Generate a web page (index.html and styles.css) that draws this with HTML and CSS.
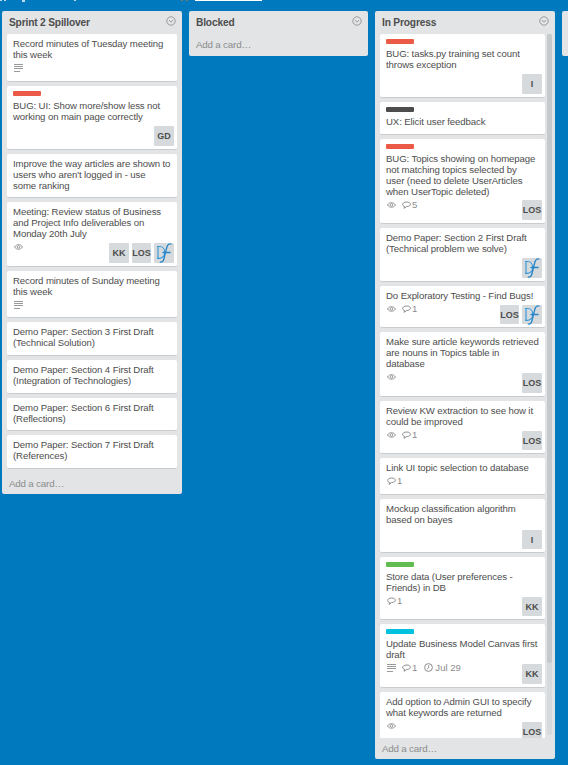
FILE: index.html
```html
<!DOCTYPE html>
<html lang="en">
<head>
<meta charset="utf-8">
<title>Board</title>
<link rel="stylesheet" href="styles.css">
</head>
<body>
<svg class="defs" width="0" height="0" aria-hidden="true">
  <symbol id="menu" viewBox="0 0 10 10"><circle cx="5" cy="5" r="4.2" fill="none" stroke="#929292" stroke-width=".9"/><path d="M2.9 4.200 5 6.100 7.100 4.200" fill="none" stroke="#929292" stroke-width=".9"/></symbol>
  <symbol id="lines" viewBox="0 0 9 8"><path d="M0 .5h9M0 2.500h9M0 4.500h9M0 7.500h6" fill="none" stroke="#999"/></symbol>
  <symbol id="eye" viewBox="0 0 9 8"><path d="M.5 4C2.500 .8 6.500 .8 8.500 4 6.500 7 2.500 7 .5 4Z" fill="none" stroke="#8c8c8c" stroke-width=".9"/><circle cx="4.500" cy="3.900" r="1.300" fill="none" stroke="#8c8c8c" stroke-width=".9"/></symbol>
  <symbol id="comment" viewBox="0 0 9 8"><path d="M2.600 5.500C-.6 4.500 .2 1 4.700 1 9.600 1 9.600 5.400 4.700 5.500L2 7.300Z" fill="none" stroke="#808080" stroke-width=".9"/></symbol>
  <symbol id="clock" viewBox="0 0 9 9"><circle cx="4.500" cy="4.500" r="3.900" fill="none" stroke="#8c8c8c"/><path d="M4.700 2v2.700L3 6" fill="none" stroke="#8c8c8c" stroke-width=".9"/></symbol>
  <symbol id="df" viewBox="0 0 20 20"><path d="M4 3.500V15.500M3 3.500H5.500C12.500 3.500 12.500 15.300 5.500 15.300H3" fill="none" stroke="#3c9ad8" stroke-width="1.200"/><path d="M17.500 1.300C15.500 .2 13.600 1.300 12.900 4L10 15.500C9.400 18.300 8 19.800 5.800 18.900M8.500 9.500H16.500" fill="none" stroke="#2585c8" stroke-width="1.300"/></symbol>
</svg>
<header class="topbar"><i class="bit a"></i><i class="bit b"></i><i class="bit c"></i><i class="bit d"></i><i class="mark"></i><i class="mark"></i><span class="field"></span></header>
<main class="board">
  <section class="list">
    <h2>Sprint 2 Spillover<svg><use href="#menu"/></svg></h2>
    <div class="cards">
      <article class="card h48"><div class="body"><p>Record minutes of Tuesday meeting<br>this week</p><div class="badges"><svg class="ln"><use href="#lines"/></svg></div></div></article>
      <article class="card h64"><div class="body"><i class="label red"></i><p>BUG: UI: Show more/show less not<br>working on main page correctly</p></div><div class="members"><b>GD</b></div></article>
      <article class="card h44"><div class="body"><p>Improve the way articles are shown to<br>users who aren't logged in - use<br>some ranking</p></div></article>
      <article class="card h65"><div class="body"><p>Meeting: Review status of Business<br>and Project Info deliverables on<br>Monday 20th July</p><div class="badges"><svg><use href="#eye"/></svg></div></div><div class="members"><b>KK</b><b class="narrow">LOS</b><b><svg><use href="#df"/></svg></b></div></article>
      <article class="card h47"><div class="body"><p>Record minutes of Sunday meeting<br>this week</p><div class="badges"><svg class="ln"><use href="#lines"/></svg></div></div></article>
      <article class="card h34"><div class="body"><p>Demo Paper: Section 3 First Draft<br>(Technical Solution)</p></div></article>
      <article class="card h34"><div class="body"><p>Demo Paper: Section 4 First Draft<br>(Integration of Technologies)</p></div></article>
      <article class="card h33"><div class="body"><p>Demo Paper: Section 6 First Draft<br>(Reflections)</p></div></article>
      <article class="card h34"><div class="body"><p>Demo Paper: Section 7 First Draft<br>(References)</p></div></article>
    </div>
    <footer class="tall">Add a card…</footer>
  </section>
  <section class="list empty">
    <h2>Blocked<svg><use href="#menu"/></svg></h2>
    <footer>Add a card…</footer>
  </section>
  <section class="list">
    <h2>In Progress<svg><use href="#menu"/></svg></h2>
    <div class="scroller">
    <div class="cards">
      <article class="card h64"><div class="body"><i class="label red"></i><p>BUG: tasks.py training set count<br>throws exception</p></div><div class="members"><b>I</b></div></article>
      <article class="card h33"><div class="body"><i class="label black"></i><p>UX: Elicit user feedback</p></div></article>
      <article class="card h85"><div class="body"><i class="label red"></i><p>BUG: Topics showing on homepage<br>not matching topics selected by<br>user (need to delete UserArticles<br>when UserTopic deleted)</p><div class="badges"><svg><use href="#eye"/></svg><svg><use href="#comment"/></svg><span>5</span></div></div><div class="members"><b>LOS</b></div></article>
      <article class="card h54"><div class="body"><p>Demo Paper: Section 2 First Draft<br>(Technical problem we solve)</p></div><div class="members"><b><svg><use href="#df"/></svg></b></div></article>
      <article class="card h42"><div class="body"><p>Do Exploratory Testing - Find Bugs!</p><div class="badges"><svg><use href="#eye"/></svg><svg><use href="#comment"/></svg><span>1</span></div></div><div class="members short"><b class="narrow">LOS</b><b><svg><use href="#df"/></svg></b></div></article>
      <article class="card h65"><div class="body"><p>Make sure article keywords retrieved<br>are nouns in Topics table in<br>database</p><div class="badges"><svg><use href="#eye"/></svg></div></div><div class="members"><b>LOS</b></div></article>
      <article class="card h53"><div class="body"><p>Review KW extraction to see how it<br>could be improved</p><div class="badges"><svg><use href="#eye"/></svg><svg><use href="#comment"/></svg><span>1</span></div></div><div class="members short"><b>LOS</b></div></article>
      <article class="card h37"><div class="body"><p>Link UI topic selection to database</p><div class="badges"><svg><use href="#comment"/></svg><span>1</span></div></div></article>
      <article class="card h54"><div class="body"><p>Mockup classification algorithm<br>based on bayes</p></div><div class="members short"><b>I</b></div></article>
      <article class="card h63"><div class="body"><i class="label green"></i><p>Store data (User preferences -<br>Friends) in DB</p><div class="badges"><svg><use href="#comment"/></svg><span>1</span></div></div><div class="members short"><b>KK</b></div></article>
      <article class="card h64"><div class="body"><i class="label sky"></i><p>Update Business Model Canvas first<br>draft</p><div class="badges"><svg class="ln"><use href="#lines"/></svg><svg><use href="#comment"/></svg><span>1</span><svg class="clock"><use href="#clock"/></svg><span>Jul 29</span></div></div><div class="members"><b>KK</b></div></article>
      <article class="card h54"><div class="body"><p>Add option to Admin GUI to specify<br>what keywords are returned</p><div class="badges"><svg><use href="#eye"/></svg></div></div><div class="members"><b>LOS</b></div></article>
    </div>
    <div class="track"><div class="thumb"></div></div>
    </div>
    <footer>Add a card…</footer>
  </section>
  <section class="list empty next"></section>
</main>
</body>
</html>
```
FILE: styles.css
```css
* { box-sizing: border-box; }
body { margin: 0; width: 568px; height: 765px; overflow: hidden; background: #0079bf; font-family: "Liberation Sans", Arial, sans-serif; color: #4d4d4d; }
.defs { display: block; }
.topbar { display: flex; height: 11px; align-items: flex-start; }
.bit { height: 1px; background: #b9dcf0; }
.a { width: 2px; }
.b { width: 2px; margin-left: 2px; }
.c { width: 3px; height: 2px; margin-left: 16px; }
.d { width: 2px; margin: 0 105px 0 49px; }
.mark { width: 2px; height: 1px; margin-right: 3px; background: #6d7f72; }
.field { margin-left: 4px; width: 67px; height: 1px; background: #fff; }
.board { display: flex; align-items: flex-start; padding-left: 2px; gap: 7px; }
.list { flex: none; width: 180px; border-radius: 2px; background: #e2e4e6; }
.list.empty { width: 179px; height: 45px; }
.list.next { flex: 1; width: auto; min-width: 0; border-radius: 2px 0 0 2px; }
.list h2 { display: flex; justify-content: space-between; align-items: flex-start; margin: 0; height: 23px; padding: 5px 6px 0 7px; font-size: 10.2px; letter-spacing: -.17px; line-height: 13px; color: #4d4d4d; white-space: nowrap; }
.list h2 svg { width: 10px; height: 10px; }
.list footer { padding-left: 7px; height: 21px; font-size: 9.8px; letter-spacing: -.2px; line-height: 21px; color: #8c8c8c; }
.list footer.tall { height: 25px; padding-top: 4px; }
.cards { display: flex; flex-direction: column; gap: 4px; padding: 0 5px; }
.card { flex: none; display: grid; grid-template-columns: 100%; background: #fff; border-bottom: 1px solid #c9cccf; border-radius: 2px; }
.body, .members { grid-area: 1 / 1; }
.body { padding: 4px 0 0 6px; }
.label { display: block; width: 28px; height: 5px; margin: 1px 0 4px; border-radius: 1px; }
.red { background: #eb5a46; }
.black { background: #4d4d4d; }
.green { background: #61bd4f; }
.sky { background: #00c2e0; }
.card p { margin: 0; font-size: 9.6px; letter-spacing: -.1px; line-height: 11px; white-space: nowrap; }
.badges { display: flex; padding: 3px 0 0 1px; height: 15px; font-size: 9.6px; line-height: 11px; color: #8c8c8c; white-space: nowrap; }
.badges svg { width: 9px; height: 8px; margin: 1px 6px 0 0; }
.badges span { margin-top: -1px; }
.badges svg + span { margin-left: -5px; }
.badges .clock { height: 9px; margin: 0 7px 0 7px; }
.members { align-self: end; justify-self: end; display: flex; gap: 3px; padding: 0 3px 3px 0; }
.members b { display: flex; align-items: center; justify-content: center; width: 20px; height: 20px; border-radius: 1px; background: #d6dadc; font-size: 9px; line-height: 20px; }
.members .narrow { width: 19px; }
.members.short b { height: 19px; }
.members svg { flex: none; width: 20px; height: 20px; }
.h33 { height: 33px; }
.h34 { height: 34px; }
.h37 { height: 37px; }
.h42 { height: 42px; }
.h44 { height: 44px; }
.h47 { height: 47px; }
.h48 { height: 48px; }
.h53 { height: 53px; }
.h54 { height: 54px; }
.h63 { height: 63px; }
.h64 { height: 64px; }
.h65 { height: 65px; }
.h85 { height: 85px; }
.scroller { display: flex; height: 704px; overflow: hidden; }
.scroller .cards { width: 175px; flex: none; }
.scroller .track { flex: none; margin-left: -3px; width: 5px; height: 701px; border-radius: 2px; background: #d6dadc; }
.thumb { height: 629px; border-radius: 2px; background: #c4c9cc; }
```
